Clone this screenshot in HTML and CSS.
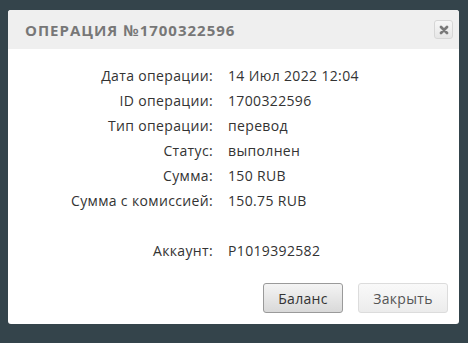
FILE: index.html
```html
<!DOCTYPE html>
<html lang="ru">
<head>
    <meta charset="UTF-8">
    <meta name="viewport" content="width=device-width, initial-scale=1.0">
    <title>Операция</title>
    <link rel="stylesheet" href="styles.css">
</head>
<body>
  <div class="dialog">
    <div class="dialog-head">
      <span class="dialog-title">Операция №1700322596</span>
      <button class="close-btn" title="Закрыть">
        <svg width="10" height="10" viewBox="0 0 10 10"><path d="M2 2 L8 8 M8 2 L2 8" stroke="#7a7a7a" stroke-width="2.8" stroke-linecap="round"/></svg>
      </button>
    </div>
    <div class="dialog-body">
      <div class="info">
        <span class="lbl">Дата операции:</span><span class="val">14 Июл 2022 12:04</span>
        <span class="lbl">ID операции:</span><span class="val">1700322596</span>
        <span class="lbl">Тип операции:</span><span class="val">перевод</span>
        <span class="lbl">Статус:</span><span class="val">выполнен</span>
        <span class="lbl">Сумма:</span><span class="val">150 RUB</span>
        <span class="lbl">Сумма с комиссией:</span><span class="val">150.75 RUB</span>
        <span class="lbl"></span><span class="val"></span>
        <span class="lbl">Аккаунт:</span><span class="val">P1019392582</span>
      </div>
      <div class="actions">
        <button class="btn btn-main">Баланс</button>
        <button class="btn btn-light">Закрыть</button>
      </div>
    </div>
  </div>
</body>
</html>
```

FILE: styles.css
```css
body {
    margin: 0;
    background-color: #34444b;
    font-family: "Open Sans", "DejaVu Sans", sans-serif;
}
.dialog {
    width: 451px;
    height: 314px;
    margin: 10px 0 0 8px;
    background: #fff;
    border-radius: 3px;
    overflow: hidden;
    display: flex;
    flex-direction: column;
}
.dialog-head {
    height: 39px;
    background: #efefef;
    display: flex;
    align-items: center;
    justify-content: space-between;
    padding: 0 6px 0 17px;
}
.dialog-title {
    text-transform: uppercase;
    font-weight: bold;
    font-size: 15px;
    letter-spacing: 1px;
    color: #777;
}
.close-btn {
    width: 19px;
    height: 19px;
    padding: 0;
    border: 1px solid #d6d6d6;
    border-radius: 3px;
    background: linear-gradient(#f7f7f7, #e6e6e6);
    display: flex;
    align-items: center;
    justify-content: center;
    cursor: pointer;
}
.dialog-body {
    flex: 1;
    display: flex;
    flex-direction: column;
    padding: 14px 11px 11px 0;
}
.info {
    display: grid;
    grid-template-columns: 205px 1fr;
    grid-auto-rows: 25px;
    column-gap: 15px;
    font-size: 14px;
    letter-spacing: 0.35px;
    color: #333;
    align-items: center;
}
.lbl {
    text-align: right;
}
.actions {
    margin-top: auto;
    display: flex;
    justify-content: flex-end;
    gap: 15px;
}
.btn {
    height: 30px;
    border-radius: 3px;
    font-family: "Open Sans", "DejaVu Sans", sans-serif;
    font-size: 14px;
    letter-spacing: 0.3px;
    cursor: pointer;
}
.btn-main {
    width: 80px;
    border: 1px solid #9a9a9a;
    background: linear-gradient(#f4f4f4, #d9d9d9);
    color: #333;
}
.btn-light {
    width: 90px;
    border: 1px solid #dcdcdc;
    background: linear-gradient(#f9f9f9, #ececec);
    color: #555;
}
```
